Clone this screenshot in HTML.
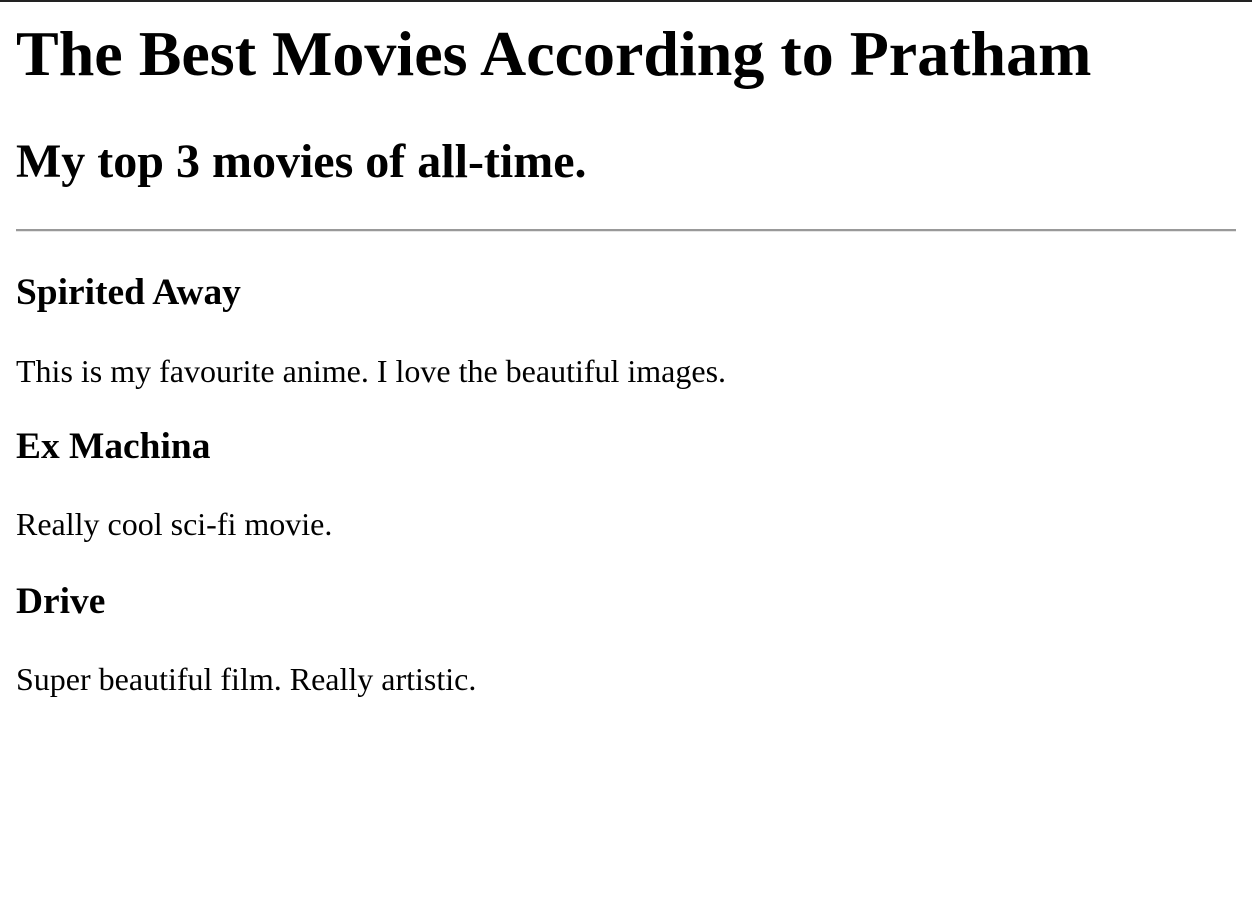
<!DOCTYPE html>
<html><head><meta charset="utf-8"><style>
html,body{margin:0;padding:0;background:#fff;width:1252px;height:900px;overflow:hidden;position:relative;font-family:"Liberation Serif","Times New Roman",serif;color:#000}
.t{position:absolute;left:16px;margin:0;line-height:1;white-space:nowrap}
.h1{font-size:64px;font-weight:bold}
.h2{font-size:48px;font-weight:bold}
.h3{font-size:37.44px;font-weight:bold}
.p{font-size:32px}
</style></head><body>
<div style="position:absolute;left:0;top:0;width:1252px;height:2px;background:#222"></div>
<div class="t h1" style="top:21.5px">The Best Movies According to Pratham</div>
<div class="t h2" style="top:137.8px">My top 3 movies of all-time.</div>
<div style="position:absolute;left:16px;top:229px;width:1220px;height:2px;background:#999;border-bottom:1px solid #e6e6e6"></div>
<div class="t h3" style="top:273.6px">Spirited Away</div>
<div class="t p" style="top:355.2px">This is my favourite anime. I love the beautiful images.</div>
<div class="t h3" style="top:427.6px">Ex Machina</div>
<div class="t p" style="top:508px">Really cool sci-fi movie.</div>
<div class="t h3" style="top:582.6px">Drive</div>
<div class="t p" style="top:663px">Super beautiful film. Really artistic.</div>
</body></html>
